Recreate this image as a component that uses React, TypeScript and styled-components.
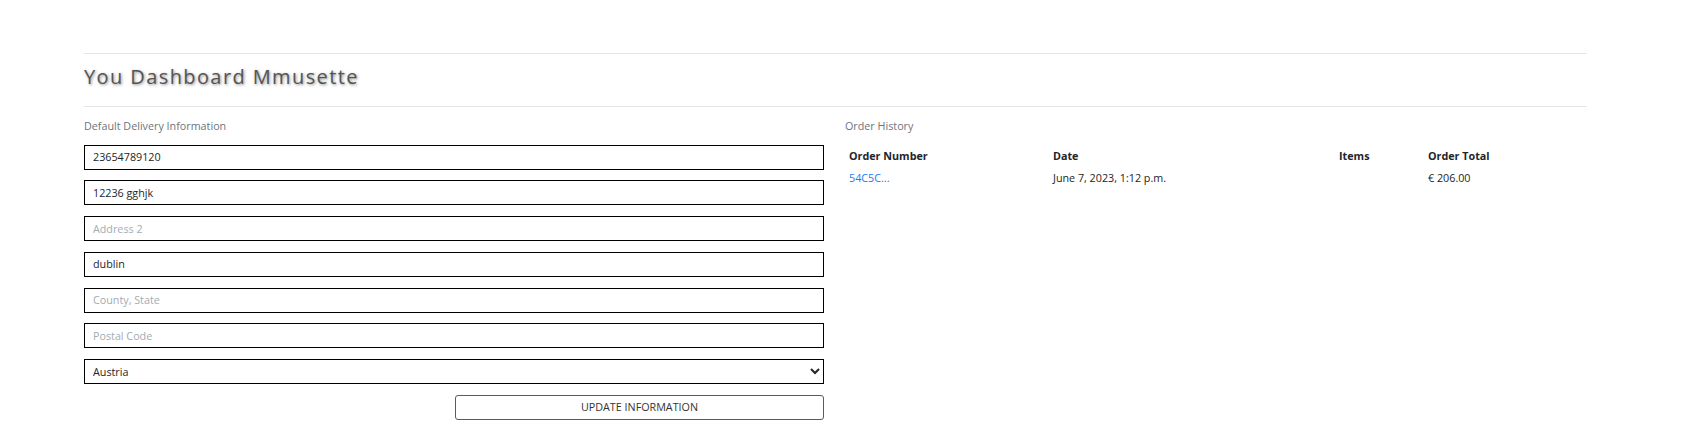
import React from "react";
import styled, { createGlobalStyle } from "styled-components";

const GlobalStyle = createGlobalStyle`
  html, body { margin: 0; padding: 0; background: #fff; }
  body { font-family: "Open Sans", "Liberation Sans", sans-serif; color: #212529; }
  * { box-sizing: border-box; }
`;

const Page = styled.div`
  padding: 53px 0 0 84px;
  width: 1587px;
`;

const Rule = styled.hr`
  margin: 0;
  border: 0;
  border-top: 1px solid #e6e6e6;
  height: 0;
`;

const Title = styled.h2`
  margin: 0;
  padding: 11px 0 17px;
  font-size: 20px;
  line-height: 24px;
  font-weight: 400;
  letter-spacing: 1.4px;
  color: #555;
  text-shadow: 1px 1px 3px rgba(0, 0, 0, 0.45);
`;

const Columns = styled.div`
  display: grid;
  grid-template-columns: 740px 742px;
  column-gap: 21px;
  padding-top: 11px;
`;

const Column = styled.section`
  display: flex;
  flex-direction: column;
`;

const SectionLabel = styled.p`
  margin: 0 0 10px;
  font-size: 10.75px;
  line-height: 16.5px;
  color: #6c757d;
`;

const Form = styled.form`
  display: flex;
  flex-direction: column;
  gap: 10.75px;
`;

const Field = styled.input`
  height: 25px;
  width: 100%;
  margin: 0;
  padding: 0 8px;
  border: 1px solid #000;
  border-radius: 0;
  font-family: "Open Sans", "Liberation Sans", sans-serif;
  font-size: 10.75px;
  color: #212529;
  background: #fff;
  outline: none;
  &::placeholder { color: #a3abb3; }
`;

const Select = styled.select`
  height: 25px;
  width: 100%;
  margin: 0;
  padding: 0 4px;
  border: 1px solid #000;
  border-radius: 0;
  font-family: "Open Sans", "Liberation Sans", sans-serif;
  font-size: 10.75px;
  color: #212529;
  background: #fff;
  outline: none;
`;

const ButtonRow = styled.div`
  display: flex;
  justify-content: flex-end;
`;

const UpdateButton = styled.button`
  width: 369px;
  height: 25px;
  margin: 0;
  padding: 0;
  border: 1px solid #5a5a5a;
  border-radius: 3px;
  background: #fff;
  font-family: "Open Sans", "Liberation Sans", sans-serif;
  font-size: 10.75px;
  color: #333;
  cursor: pointer;
`;

const Table = styled.table`
  width: 742px;
  border-collapse: collapse;
  table-layout: fixed;
  font-size: 10.75px;
  line-height: 16px;
`;

const HeadCell = styled.th`
  text-align: left;
  font-weight: 700;
  color: #212529;
  padding: 3px 4px;
`;

const Cell = styled.td`
  padding: 3px 4px;
  color: #212529;
`;

const OrderLink = styled.a`
  color: #1a7cf5;
  text-decoration: none;
`;

export default function App() {
  return (
    <>
      <GlobalStyle />
      <Page>
        <Rule />
        <Title>You Dashboard Mmusette</Title>
        <Rule />
        <Columns>
          <Column>
            <SectionLabel>Default Delivery Information</SectionLabel>
            <Form onSubmit={(e) => e.preventDefault()}>
              <Field defaultValue="23654789120" placeholder="Phone Number" />
              <Field defaultValue="12236 gghjk" placeholder="Address 1" />
              <Field placeholder="Address 2" />
              <Field defaultValue="dublin" placeholder="Town or City" />
              <Field placeholder="County, State" />
              <Field placeholder="Postal Code" />
              <Select defaultValue="AT">
                <option value="AT">Austria</option>
                <option value="IE">Ireland</option>
              </Select>
              <ButtonRow>
                <UpdateButton type="submit">UPDATE INFORMATION</UpdateButton>
              </ButtonRow>
            </Form>
          </Column>
          <Column>
            <SectionLabel>Order History</SectionLabel>
            <Table>
              <colgroup>
                <col style={{ width: 204 }} />
                <col style={{ width: 286 }} />
                <col style={{ width: 89 }} />
                <col style={{ width: 163 }} />
              </colgroup>
              <thead>
                <tr>
                  <HeadCell>Order Number</HeadCell>
                  <HeadCell>Date</HeadCell>
                  <HeadCell>Items</HeadCell>
                  <HeadCell>Order Total</HeadCell>
                </tr>
              </thead>
              <tbody>
                <tr>
                  <Cell>
                    <OrderLink href="#">54C5C...</OrderLink>
                  </Cell>
                  <Cell>June 7, 2023, 1:12 p.m.</Cell>
                  <Cell></Cell>
                  <Cell>€ 206.00</Cell>
                </tr>
              </tbody>
            </Table>
          </Column>
        </Columns>
      </Page>
    </>
  );
}
